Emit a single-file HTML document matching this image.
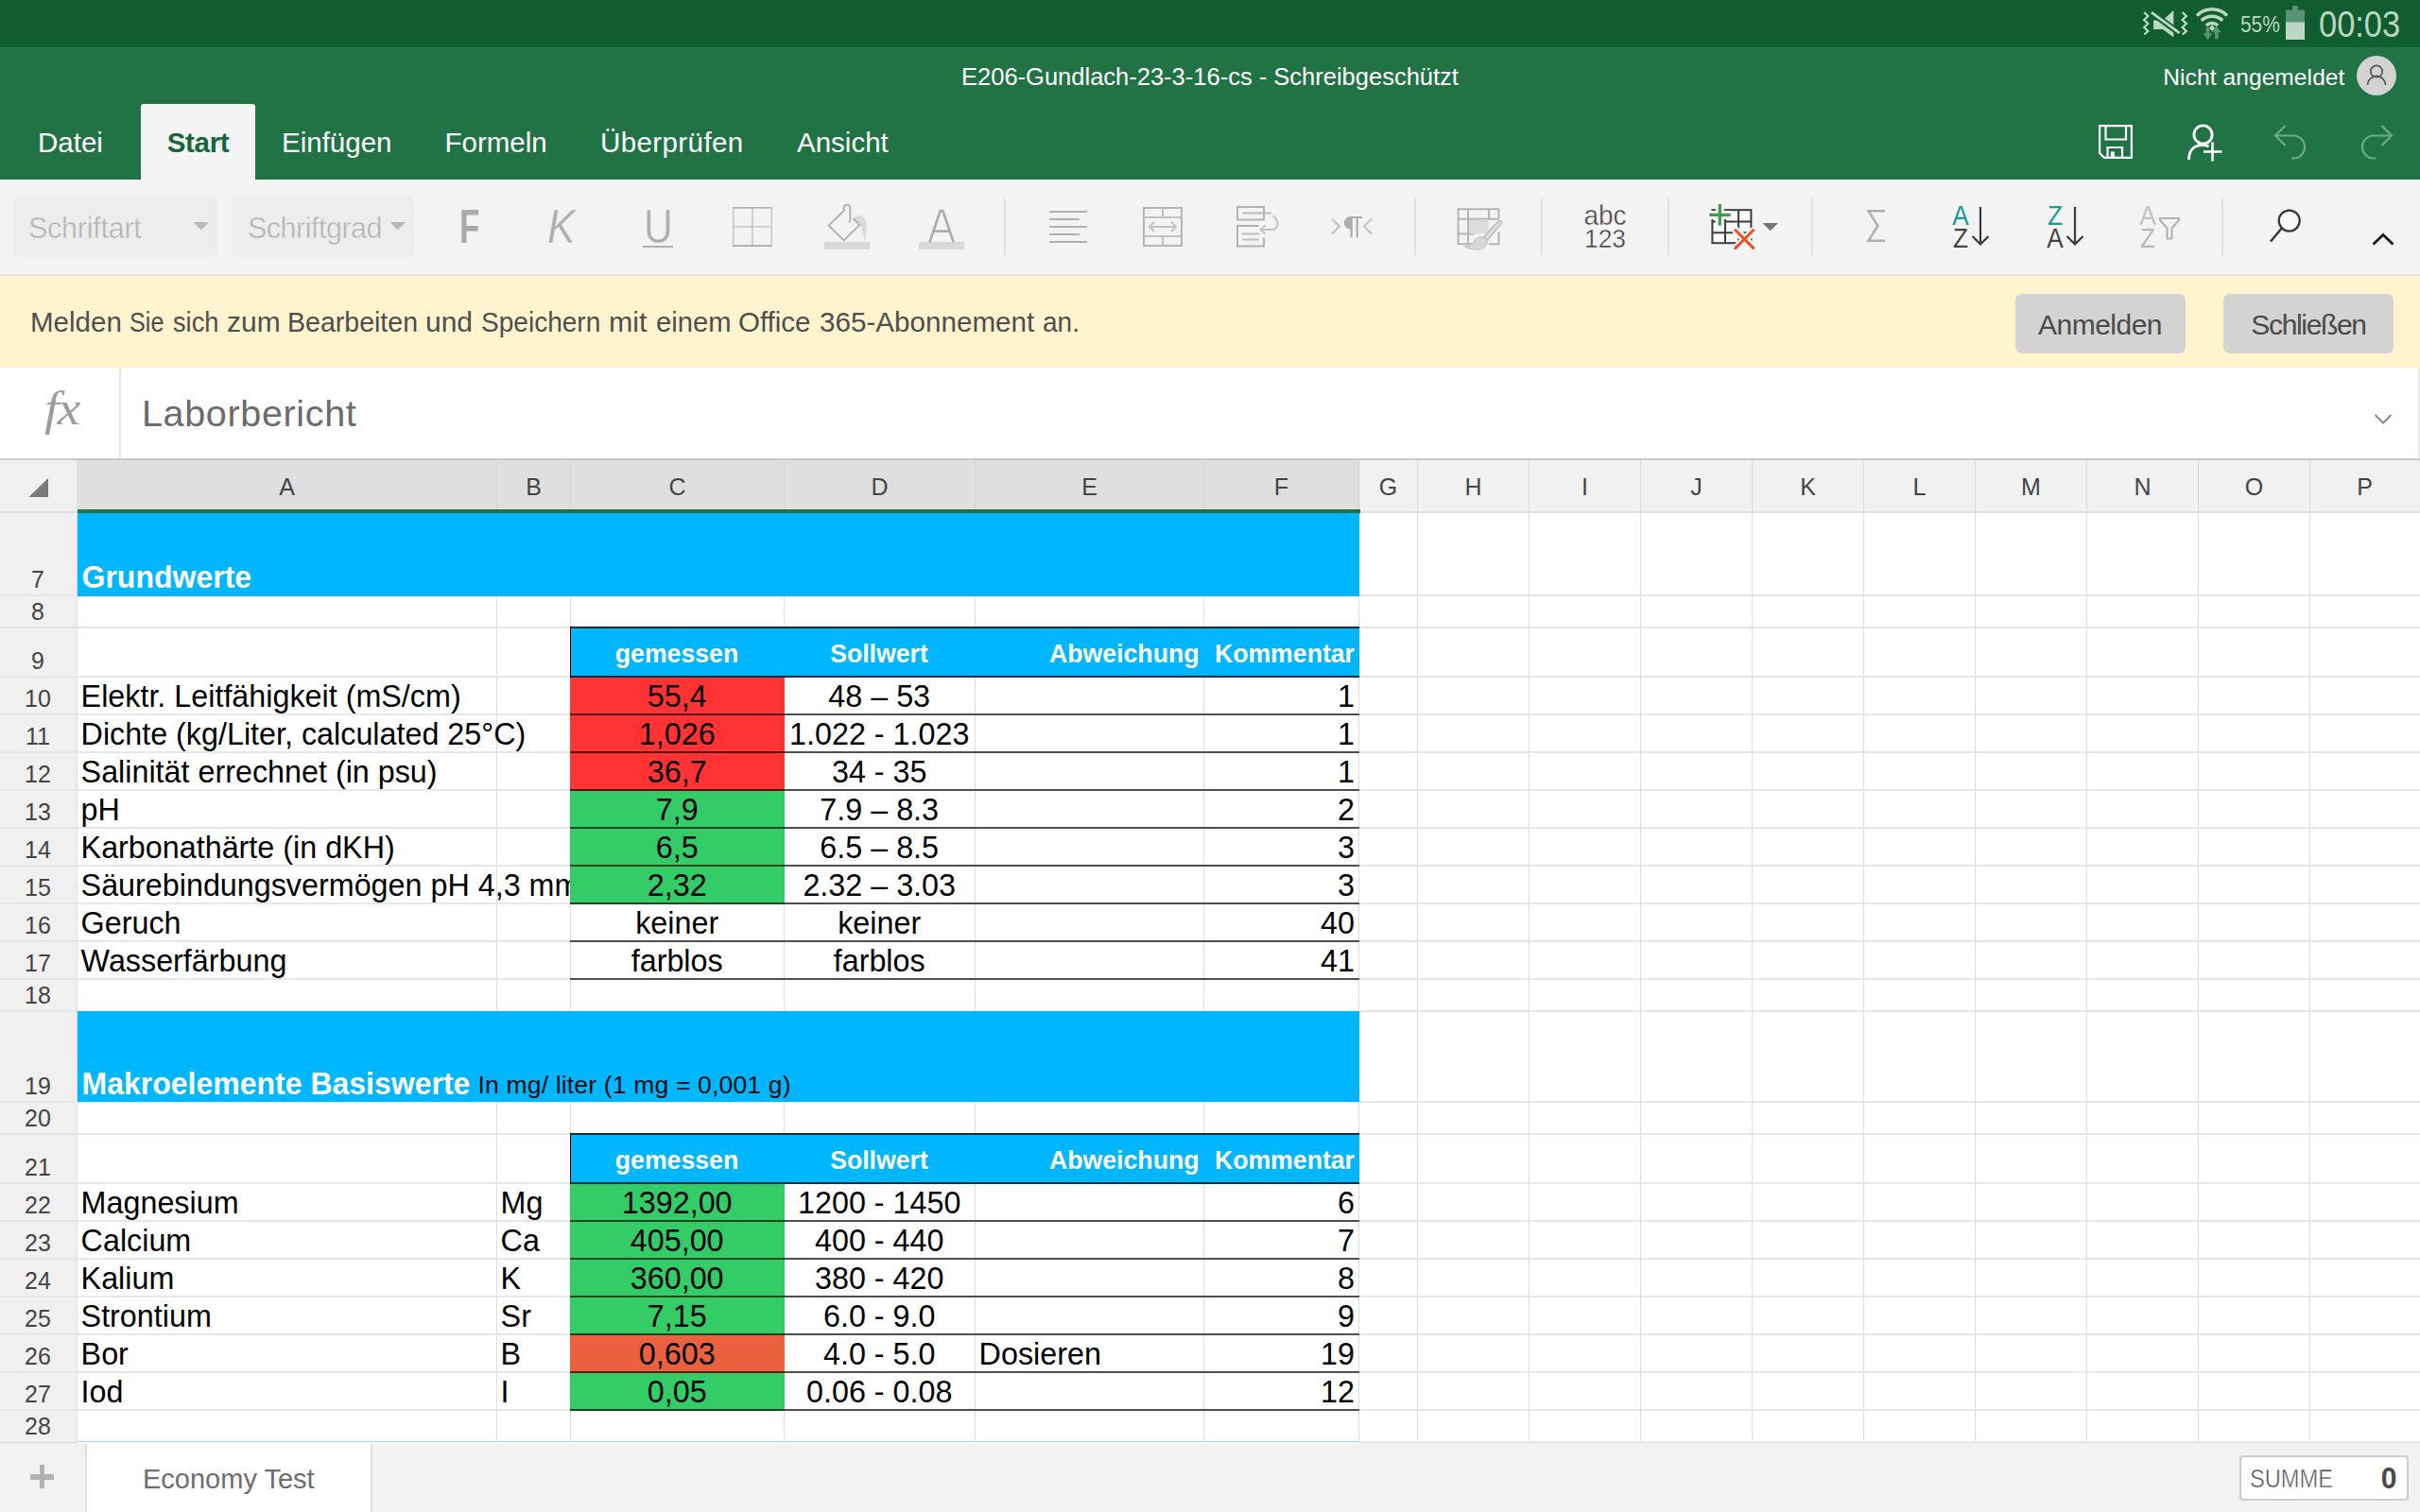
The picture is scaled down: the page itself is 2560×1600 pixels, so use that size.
<!DOCTYPE html>
<html><head><meta charset="utf-8"><title>Excel</title>
<style>
html,body{margin:0;padding:0;width:2560px;height:1600px;overflow:hidden;}
body{width:2560px;height:1600px;position:relative;overflow:hidden;background:#fff;font-family:"Liberation Sans",sans-serif;}
div,svg{box-sizing:border-box;}
</style></head><body><div id="root" style="position:absolute;left:0;top:0;width:2560px;height:1600px;overflow:hidden;">
<div style="position:absolute;left:0px;top:0px;width:2560px;height:50px;background:#105d30;"></div>
<div style="position:absolute;left:0px;top:50px;width:2560px;height:140px;background:#217346;"></div>
<div style="position:absolute;left:0px;top:190px;width:2560px;height:101px;background:#f3f3f3;"></div>
<div style="position:absolute;left:0px;top:290px;width:2560px;height:2px;background:#e3e3e3;"></div>
<div style="position:absolute;left:0px;top:292px;width:2560px;height:97px;background:#fff4ce;"></div>
<div style="position:absolute;left:0px;top:389px;width:2560px;height:96px;background:#ffffff;"></div>
<div style="position:absolute;left:0px;top:485px;width:2560px;height:2px;background:#c9c9c9;"></div>
<div style="position:absolute;top:10.38px;line-height:31px;font-size:24px;color:#bcd6c5;white-space:nowrap;font-family:'Liberation Sans',sans-serif;left:2369.5px;transform:scaleX(.87);transform-origin:left;">55%</div>
<div style="position:absolute;top:1.73px;line-height:49px;font-size:38px;color:#bcd6c5;white-space:nowrap;font-family:'Liberation Sans',sans-serif;left:2452.5px;transform:scaleX(.905);transform-origin:left;">00:03</div>
<svg style="position:absolute;left:2418px;top:6px" width="20" height="36" viewBox="0 0 20 36"><rect x="7" y="0" width="6" height="5" fill="#5a9373"/><rect x="0" y="4.5" width="20" height="13.5" fill="#5a9373"/><rect x="0" y="17.5" width="20" height="18.5" fill="#bcd6c5"/></svg>
<svg style="position:absolute;left:2263.5px;top:8px" width="54" height="34" viewBox="0 0 52 34" preserveAspectRatio="none"><g fill="none" stroke="#bcd6c5" stroke-width="2.2"><path d="M4 5 l4 4 l-4 4 l4 4 l-4 4 l4 4 l-4 3.5"/><path d="M43 5 l4 4 l-4 4 l4 4 l-4 4 l4 4 l-4 3.5"/></g><path d="M13.5 13.5 h9.5 l11 -10.5 v28.5 l-11 -8.5 h-9.5 z" fill="#bcd6c5"/><path d="M10 4 L41 28" stroke="#105d30" stroke-width="6.4"/><path d="M11.5 5.2 L40 26.8" stroke="#bcd6c5" stroke-width="2.7"/></svg>
<svg style="position:absolute;left:2322px;top:6px" width="36" height="37" viewBox="0 0 36 37"><g fill="none" stroke="#bcd6c5" stroke-width="3.6">
<path d="M2 10.5 A22.5 22.5 0 0 1 34 10.5"/>
<path d="M6.8 15.8 A16 16 0 0 1 29.2 15.8"/>
<path d="M11.8 21 A9 9 0 0 1 24.2 21"/></g>
<path d="M14.8 23.8 L18 20.2 L21.2 23.8 L18 27 z" fill="#bcd6c5"/>
<path d="M11.7 23 h3.6 v6.5 h3 l-4.8 6.8 l-4.8 -6.8 h3 z" fill="#5a9373"/>
<path d="M21 35.2 h3.6 v-7 h3 l-4.8 -6.8 l-4.8 6.8 h3 z" fill="#5a9373"/></svg>
<div style="position:absolute;top:65.16px;line-height:33px;font-size:25.5px;color:#ffffff;white-space:nowrap;font-family:'Liberation Sans',sans-serif;left:280px;width:2000px;text-align:center;">E206-Gundlach-23-3-16-cs - Schreibgeschützt</div>
<div style="position:absolute;top:65.51px;line-height:32px;font-size:24.5px;color:#ffffff;white-space:nowrap;font-family:'Liberation Sans',sans-serif;letter-spacing:0.1px;left:480.5px;width:2000px;text-align:right;">Nicht angemeldet</div>
<svg style="position:absolute;left:2492px;top:58px" width="44" height="44" viewBox="0 0 44 44"><circle cx="22" cy="22" r="21" fill="#d2d2d2"/>
<circle cx="22" cy="17.5" r="6.2" fill="none" stroke="#5a5a5a" stroke-width="1.8"/>
<path d="M12.5 32 a9.5 9.5 0 0 1 19 0" fill="none" stroke="#5a5a5a" stroke-width="1.8"/></svg>
<div style="position:absolute;left:149px;top:110px;width:121px;height:80px;background:#f3f3f3;border-radius:3px 3px 0 0;"></div>
<div style="position:absolute;top:131.77px;line-height:38px;font-size:29.5px;color:#fff;white-space:nowrap;font-family:'Liberation Sans',sans-serif;left:40px;">Datei</div>
<div style="position:absolute;top:131.77px;line-height:38px;font-size:29.5px;color:#17653a;white-space:nowrap;font-family:'Liberation Sans',sans-serif;font-weight:bold;letter-spacing:-0.3px;left:-790.5px;width:2000px;text-align:center;">Start</div>
<div style="position:absolute;top:131.77px;line-height:38px;font-size:29.5px;color:#fff;white-space:nowrap;font-family:'Liberation Sans',sans-serif;left:298px;">Einfügen</div>
<div style="position:absolute;top:131.77px;line-height:38px;font-size:29.5px;color:#fff;white-space:nowrap;font-family:'Liberation Sans',sans-serif;left:470.5px;">Formeln</div>
<div style="position:absolute;top:131.77px;line-height:38px;font-size:29.5px;color:#fff;white-space:nowrap;font-family:'Liberation Sans',sans-serif;letter-spacing:0.4px;left:635px;">Überprüfen</div>
<div style="position:absolute;top:131.77px;line-height:38px;font-size:29.5px;color:#fff;white-space:nowrap;font-family:'Liberation Sans',sans-serif;left:843px;">Ansicht</div>
<svg style="position:absolute;left:2218px;top:130px" width="40" height="40" viewBox="0 0 40 40"><g fill="none" stroke="#fff" stroke-width="2.2">
<path d="M3.1 3.1 H36.9 V36.9 H8 L3.1 32 Z"/>
<path d="M9.5 3.1 V17.5 H31 V3.1"/>
<path d="M11.5 36.9 V26 H27 V36.9"/>
</g><rect x="14.8" y="30.5" width="4" height="6.4" fill="#fff"/></svg>
<svg style="position:absolute;left:2312px;top:130px" width="40" height="42" viewBox="0 0 40 42"><g fill="none" stroke="#fff" stroke-width="2.8">
<circle cx="18.5" cy="12.5" r="9.6"/>
<path d="M3.5 39 C3.5 28 10 23.5 18 23.5 C20.5 23.5 22.5 24 24.5 25"/>
<path d="M28.5 20.5 V40.5 M19 30.5 H38.5" stroke-width="2.6"/></g></svg>
<svg style="position:absolute;left:2404px;top:130px" width="38" height="40" viewBox="0 0 38 40"><g fill="none" stroke="#6fa88a" stroke-width="2.2">
<path d="M13.5 3 L3 13.5 L13.5 24"/>
<path d="M3 13.5 H22 A12 12 0 0 1 22 37.5 H20"/></g></svg>
<svg style="position:absolute;left:2494.5px;top:130px" width="38" height="40" viewBox="0 0 38 40"><g fill="none" stroke="#6fa88a" stroke-width="2.2" transform="translate(38,0) scale(-1,1)">
<path d="M13.5 3 L3 13.5 L13.5 24"/>
<path d="M3 13.5 H22 A12 12 0 0 1 22 37.5 H20"/></g></svg>
<div style="position:absolute;left:14px;top:208px;width:216px;height:64px;background:#ededed;border-radius:6px;"></div>
<div style="position:absolute;left:246px;top:208px;width:192px;height:64px;background:#ededed;border-radius:6px;"></div>
<div style="position:absolute;top:220.93px;line-height:40px;font-size:30.5px;color:#b4b4b4;white-space:nowrap;font-family:'Liberation Sans',sans-serif;letter-spacing:-0.25px;left:30px;-webkit-text-stroke:0.45px #ededed;">Schriftart</div>
<div style="position:absolute;top:220.93px;line-height:40px;font-size:30.5px;color:#b4b4b4;white-space:nowrap;font-family:'Liberation Sans',sans-serif;letter-spacing:-0.5px;left:262px;-webkit-text-stroke:0.45px #ededed;">Schriftgrad</div>
<svg style="position:absolute;left:204px;top:234px" width="18" height="10" viewBox="0 0 18 10"><path d="M0.5 1 H17 L8.75 9.5 Z" fill="#b9b9b9"/></svg>
<svg style="position:absolute;left:412px;top:234px" width="18" height="10" viewBox="0 0 18 10"><path d="M0.5 1 H17 L8.75 9.5 Z" fill="#b9b9b9"/></svg>
<div style="position:absolute;top:207.91px;line-height:64px;font-size:49.3px;color:#a9a9a9;white-space:nowrap;font-family:'Liberation Sans',sans-serif;font-weight:bold;left:486px;transform:scaleX(.705);transform-origin:left;">F</div>
<div style="position:absolute;top:207.91px;line-height:64px;font-size:49.3px;color:#acacac;white-space:nowrap;font-family:'Liberation Sans',sans-serif;font-style:italic;left:579px;transform:scaleX(.9);transform-origin:left;-webkit-text-stroke:0.5px #f3f3f3;">K</div>
<div style="position:absolute;top:207.91px;line-height:64px;font-size:49.3px;color:#acacac;white-space:nowrap;font-family:'Liberation Sans',sans-serif;left:680.6px;transform:scaleX(.86);transform-origin:left;-webkit-text-stroke:0.5px #f3f3f3;">U</div>
<div style="position:absolute;left:680px;top:260px;width:32px;height:2px;background:#b0b0b0;"></div>
<svg style="position:absolute;left:774px;top:218px" width="44" height="44" viewBox="0 0 44 44"><g fill="none" stroke="#c6c6c6" stroke-width="1.6"><rect x="1.8" y="1.8" width="40.4" height="40.4"/><path d="M22 1.8 V42.2 M1.8 22 H42.2"/></g>
<path d="M1 1.8 H43" stroke="#b4b4b4" stroke-width="1.6"/><path d="M1 42.2 H43" stroke="#ababab" stroke-width="1.8"/></svg>
<div style="position:absolute;left:872px;top:256px;width:48px;height:8px;background:#d9d9d9;"></div>
<svg style="position:absolute;left:872px;top:212px" width="50" height="46" viewBox="0 0 50 46"><path d="M30.8 19.2 C33 16 38 15 41 17.5 C44.5 20.5 45 26 44.7 31 C44.5 36 43.3 40 42.4 42.9 C41.5 36 40.5 31 38.7 27.5 Z" fill="#dadada"/>
<path d="M20.8 11 L4.6 26.4 L20.6 42.4 L37.2 26.1 L30.4 19.3" fill="none" stroke="#b0b0b0" stroke-width="1.9" stroke-linejoin="miter"/>
<path d="M20.8 11.8 V8 A3.25 3.25 0 0 1 27.3 8 V23.5" fill="none" stroke="#b0b0b0" stroke-width="1.9"/></svg>
<div style="position:absolute;left:972px;top:256px;width:48px;height:8px;background:#d9d9d9;"></div>
<svg style="position:absolute;left:980px;top:220px" width="32" height="38" viewBox="0 0 32 38"><path d="M3.4 36.4 L14.7 3.1 H17.4 L28.7 36.4 M8.6 24.7 H23.5" fill="none" stroke="#adadad" stroke-width="2.7"/></svg>
<div style="position:absolute;left:1062px;top:210px;width:2px;height:60px;background:#e1e1e1;"></div>
<div style="position:absolute;left:1496px;top:210px;width:2px;height:60px;background:#e1e1e1;"></div>
<div style="position:absolute;left:1630px;top:210px;width:2px;height:60px;background:#e1e1e1;"></div>
<div style="position:absolute;left:1764px;top:210px;width:2px;height:60px;background:#e1e1e1;"></div>
<div style="position:absolute;left:1916px;top:210px;width:2px;height:60px;background:#e1e1e1;"></div>
<div style="position:absolute;left:2350px;top:210px;width:2px;height:60px;background:#e1e1e1;"></div>
<div style="position:absolute;left:1110px;top:223px;width:40px;height:2px;background:#b0b0b0;"></div>
<div style="position:absolute;left:1110px;top:231px;width:32px;height:2px;background:#b0b0b0;"></div>
<div style="position:absolute;left:1110px;top:239px;width:40px;height:2px;background:#b0b0b0;"></div>
<div style="position:absolute;left:1110px;top:247px;width:32px;height:2px;background:#b0b0b0;"></div>
<div style="position:absolute;left:1110px;top:255px;width:40px;height:2px;background:#b0b0b0;"></div>
<svg style="position:absolute;left:1208px;top:218px" width="44" height="44" viewBox="0 0 44 44"><g fill="none" stroke="#b4b4b4" stroke-width="2"><rect x="2" y="2" width="40" height="40"/>
<path d="M2 12 H42 M2 32 H42 M22 2 V12 M22 32 V42" stroke="#c2c2c2"/>
<path d="M8 22 H36 M13 17 L8 22 L13 27 M31 17 L36 22 L31 27" stroke="#c2c2c2"/></g></svg>
<svg style="position:absolute;left:1306px;top:216px" width="48" height="48" viewBox="0 0 48 48"><g fill="none" stroke="#b2b2b2" stroke-width="2">
<rect x="3" y="3" width="28" height="13.5"/>
<path d="M8 9.5 H39" stroke="#bdbdbd"/>
<path d="M25.5 23 H3 V44.5 H31 V35.5"/>
<path d="M8 31.5 H26 M8 37.5 H26" stroke="#bdbdbd"/>
<path d="M40.2 12.4 C47.5 16.5 47.5 27 39 27 H27.4 M32.4 22.2 L27.4 27 L32.4 31.8" stroke="#c4c4c4"/></g></svg>
<svg style="position:absolute;left:1406px;top:226px" width="48" height="28" viewBox="0 0 48 28"><g fill="none" stroke="#c0c0c0" stroke-width="2"><path d="M3 5.5 L11 13.5 L3 21.5"/><path d="M45 5.5 L37 13.5 L45 21.5"/></g>
<path d="M22.5 3 A6.7 6.7 0 0 0 22.5 16.4 V25.5 H24.8 V5 H28.6 V25.5 H30.8 V5 H35 V3 Z" fill="#adadad"/></svg>
<svg style="position:absolute;left:1540px;top:219px" width="52" height="48" viewBox="0 0 52 48"><g fill="none" stroke="#b4b4b4" stroke-width="2">
<path d="M30 39.2 H2.6 V2.2 H45.5 V12.5"/><path d="M45.5 26.5 V39.2 H35"/>
<path d="M13.1 2.2 V39.2 M35 2.2 V12.7 M2.6 12.7 H45.5 M2.6 28.6 H20"/></g>
<rect x="14.1" y="13.7" width="20.4" height="14.4" fill="#dcdcdc"/>
<path d="M47.6 15 C48.7 15.8 48.5 17.2 47.7 18.2 L33.3 35 L29.6 32 L44.5 15.7 C45.4 14.7 46.7 14.3 47.6 15 Z" fill="#e2e2e2" stroke="#b9b9b9" stroke-width="1.5"/>
<path d="M29.2 31.7 L33.6 35.4 C33.6 40.5 30 44.3 24 44.9 C18 45.4 13 44 9.6 41.8 C15 41.6 18 39.5 19.5 36.5 C21 33.5 25 31.2 29.2 31.7 Z" fill="#d8d8d8" stroke="#c4c4c4" stroke-width="1.2"/></svg>
<div style="position:absolute;top:209.62px;line-height:37px;font-size:28.5px;color:#444;white-space:nowrap;font-family:'Liberation Sans',sans-serif;left:698px;width:2000px;text-align:center;transform:scale(0.98,1.05);transform-origin:50% 28.38px;-webkit-text-stroke:0.4px #f3f3f3;">abc</div>
<div style="position:absolute;top:234.80px;line-height:36px;font-size:27.4px;color:#444;white-space:nowrap;font-family:'Liberation Sans',sans-serif;left:698px;width:2000px;text-align:center;transform:scale(0.96,1);transform-origin:50% 27.50px;-webkit-text-stroke:0.4px #f3f3f3;">123</div>
<svg style="position:absolute;left:1804px;top:212px" width="56" height="56" viewBox="0 0 56 56"><g fill="none" stroke="#3c3c3c" stroke-width="2">
<rect x="7.4" y="10.2" width="41" height="35" fill="#f9f9f9"/>
<path d="M21 10.2 V45.2 M35.1 10.2 V45.2 M7.4 22.6 H48.4 M7.4 34.3 H48.4"/></g>
<path d="M15.3 3 V27.6 M3 15.4 H27.6" stroke="#f4f4f4" stroke-width="9" fill="none"/>
<path d="M31.5 31.2 L52 51.7 M52 31.2 L31.5 51.7" stroke="#f4f4f4" stroke-width="8.5" fill="none"/>
<path d="M15.3 4.1 V26.6 M4.2 15.4 H26.6" stroke="#3f9b46" stroke-width="3.2" fill="none"/>
<path d="M31 30.8 L51.6 51.4 M51.6 30.8 L31 51.4" stroke="#f04e23" stroke-width="3" fill="none"/></svg>
<svg style="position:absolute;left:1864px;top:235px" width="18" height="10" viewBox="0 0 18 10"><path d="M0.5 1 H17 L8.75 9.2 Z" fill="#777"/></svg>
<svg style="position:absolute;left:1972px;top:220px" width="24" height="38" viewBox="0 0 24 38"><path d="M22 3.2 H4.5 L14.5 19 L4.5 34.8 H22" fill="none" stroke="#adadad" stroke-width="2.4"/></svg>
<div style="position:absolute;top:209.62px;line-height:37px;font-size:28.2px;color:#1a9a93;white-space:nowrap;font-family:'Liberation Sans',sans-serif;left:1074px;width:2000px;text-align:center;transform:scale(0.93,1.07);transform-origin:50% 28.28px;">A</div>
<div style="position:absolute;top:233.52px;line-height:37px;font-size:28.2px;color:#444;white-space:nowrap;font-family:'Liberation Sans',sans-serif;left:1074px;width:2000px;text-align:center;transform:scale(0.93,1.07);transform-origin:50% 28.28px;">Z</div>
<svg style="position:absolute;left:2084px;top:217px" width="22" height="46" viewBox="0 0 22 46"><path d="M11 2 V41.5 M2.5 33 L11 41.5 L19.5 33" fill="none" stroke="#3c3c3c" stroke-width="2.2"/></svg>
<div style="position:absolute;top:209.62px;line-height:37px;font-size:28.2px;color:#1a9a93;white-space:nowrap;font-family:'Liberation Sans',sans-serif;left:1174px;width:2000px;text-align:center;transform:scale(0.93,1.07);transform-origin:50% 28.28px;">Z</div>
<div style="position:absolute;top:233.52px;line-height:37px;font-size:28.2px;color:#444;white-space:nowrap;font-family:'Liberation Sans',sans-serif;left:1174px;width:2000px;text-align:center;transform:scale(0.93,1.07);transform-origin:50% 28.28px;">A</div>
<svg style="position:absolute;left:2184px;top:217px" width="22" height="46" viewBox="0 0 22 46"><path d="M11 2 V41.5 M2.5 33 L11 41.5 L19.5 33" fill="none" stroke="#3c3c3c" stroke-width="2.2"/></svg>
<div style="position:absolute;top:209.62px;line-height:37px;font-size:28.2px;color:#c2c2c2;white-space:nowrap;font-family:'Liberation Sans',sans-serif;left:1272px;width:2000px;text-align:center;transform:scale(0.93,1.07);transform-origin:50% 28.28px;">A</div>
<div style="position:absolute;top:233.52px;line-height:37px;font-size:28.2px;color:#b8b8b8;white-space:nowrap;font-family:'Liberation Sans',sans-serif;left:1272px;width:2000px;text-align:center;transform:scale(0.93,1.07);transform-origin:50% 28.28px;">Z</div>
<svg style="position:absolute;left:2282px;top:228px" width="26" height="28" viewBox="0 0 26 28"><path d="M3 3 H23 V5 L15.5 13.5 V24.5 H10.5 V13.5 L3 5 Z" fill="none" stroke="#b2b2b2" stroke-width="2.1"/></svg>
<svg style="position:absolute;left:2398px;top:218px" width="40" height="42" viewBox="0 0 40 42"><circle cx="23.7" cy="15.6" r="11" fill="#fafafa" stroke="#333" stroke-width="2.2"/><path d="M15.5 23.8 L4 37.5" stroke="#333" stroke-width="2.4"/></svg>
<svg style="position:absolute;left:2508px;top:244px" width="26" height="18" viewBox="0 0 26 18"><path d="M2.5 14.5 L13 4.5 L23.5 14.5" fill="none" stroke="#1e1e1e" stroke-width="2.8"/></svg>
<div style="position:absolute;top:321.77px;line-height:38px;font-size:29.5px;color:#4e4e4e;white-space:nowrap;font-family:'Liberation Sans',sans-serif;left:31.6px;transform:scale(1.0016,1);transform-origin:0 29.23px;">Melden</div>
<div style="position:absolute;top:321.77px;line-height:38px;font-size:29.5px;color:#4e4e4e;white-space:nowrap;font-family:'Liberation Sans',sans-serif;left:136.95px;transform:scale(0.8537,1);transform-origin:0 29.23px;">Sie</div>
<div style="position:absolute;top:321.77px;line-height:38px;font-size:29.5px;color:#4e4e4e;white-space:nowrap;font-family:'Liberation Sans',sans-serif;left:183.2px;transform:scale(0.9226,1);transform-origin:0 29.23px;">sich</div>
<div style="position:absolute;top:321.77px;line-height:38px;font-size:29.5px;color:#4e4e4e;white-space:nowrap;font-family:'Liberation Sans',sans-serif;left:239.68px;transform:scale(1.0159,1);transform-origin:0 29.23px;">zum</div>
<div style="position:absolute;top:321.77px;line-height:38px;font-size:29.5px;color:#4e4e4e;white-space:nowrap;font-family:'Liberation Sans',sans-serif;left:303.67px;transform:scale(0.9671,1);transform-origin:0 29.23px;">Bearbeiten</div>
<div style="position:absolute;top:321.77px;line-height:38px;font-size:29.5px;color:#4e4e4e;white-space:nowrap;font-family:'Liberation Sans',sans-serif;left:450.38px;transform:scale(1.0168,1);transform-origin:0 29.23px;">und</div>
<div style="position:absolute;top:321.77px;line-height:38px;font-size:29.5px;color:#4e4e4e;white-space:nowrap;font-family:'Liberation Sans',sans-serif;left:509.45px;transform:scale(0.9507,1);transform-origin:0 29.23px;">Speichern</div>
<div style="position:absolute;top:321.77px;line-height:38px;font-size:29.5px;color:#4e4e4e;white-space:nowrap;font-family:'Liberation Sans',sans-serif;left:644.47px;transform:scale(1.0281,1);transform-origin:0 29.23px;">mit</div>
<div style="position:absolute;top:321.77px;line-height:38px;font-size:29.5px;color:#4e4e4e;white-space:nowrap;font-family:'Liberation Sans',sans-serif;left:694.11px;transform:scale(0.9888,1);transform-origin:0 29.23px;">einem</div>
<div style="position:absolute;top:321.77px;line-height:38px;font-size:29.5px;color:#4e4e4e;white-space:nowrap;font-family:'Liberation Sans',sans-serif;left:780.9px;transform:scale(0.9999,1);transform-origin:0 29.23px;">Office</div>
<div style="position:absolute;top:321.77px;line-height:38px;font-size:29.5px;color:#4e4e4e;white-space:nowrap;font-family:'Liberation Sans',sans-serif;left:866.5px;transform:scale(1.0043,1);transform-origin:0 29.23px;">365-Abonnement</div>
<div style="position:absolute;top:321.77px;line-height:38px;font-size:29.5px;color:#4e4e4e;white-space:nowrap;font-family:'Liberation Sans',sans-serif;left:1103.35px;transform:scale(0.9494,1);transform-origin:0 29.23px;">an.</div>
<div style="position:absolute;left:2132px;top:311px;width:180px;height:63px;background:#d3d3d3;border-radius:7px;"></div>
<div style="position:absolute;left:2352px;top:311px;width:180px;height:63px;background:#d3d3d3;border-radius:7px;"></div>
<div style="position:absolute;top:324.40px;line-height:39px;font-size:30px;color:#4a4a4a;white-space:nowrap;font-family:'Liberation Sans',sans-serif;letter-spacing:-0.5px;left:1221.5px;width:2000px;text-align:center;">Anmelden</div>
<div style="position:absolute;top:324.40px;line-height:39px;font-size:30px;color:#4a4a4a;white-space:nowrap;font-family:'Liberation Sans',sans-serif;letter-spacing:-1.35px;left:1442px;width:2000px;text-align:center;">Schließen</div>
<div style="position:absolute;left:126px;top:389px;width:2px;height:96px;background:#e6e6e6;"></div>
<div style="position:absolute;top:399.62px;line-height:65px;font-size:50px;color:#9c9c9c;white-space:nowrap;font-family:'Liberation Serif',serif;font-style:italic;letter-spacing:-1.5px;left:47px;transform:scaleX(1.1);transform-origin:left;">fx</div>
<div style="position:absolute;top:411.61px;line-height:51px;font-size:39.5px;color:#6b6b6b;white-space:nowrap;font-family:'Liberation Sans',sans-serif;letter-spacing:0.65px;left:150px;">Laborbericht</div>
<svg style="position:absolute;left:2510px;top:436px" width="22" height="14" viewBox="0 0 22 14"><path d="M2.5 3 L11 11.5 L19.5 3" fill="none" stroke="#8a8a8a" stroke-width="2"/></svg>
<div style="position:absolute;left:2558px;top:389px;width:2px;height:96px;background:#ececec;"></div>
<div style="position:absolute;left:0px;top:487px;width:82px;height:1039px;background:#f0f0f0;"></div>
<div style="position:absolute;left:82px;top:487px;width:1356px;height:52px;background:#dfdfdf;"></div>
<div style="position:absolute;left:1438px;top:487px;width:1122px;height:54px;background:#f1f1f1;"></div>
<div style="position:absolute;left:1438px;top:541px;width:1122px;height:2px;background:#dedede;"></div>
<div style="position:absolute;left:82px;top:539px;width:1357px;height:4px;background:#217346;"></div>
<div style="position:absolute;left:0px;top:541px;width:81px;height:2px;background:#dedede;"></div>
<div style="position:absolute;left:81px;top:487px;width:1px;height:1039px;background:#dfdfdf;"></div>
<svg style="position:absolute;left:28px;top:504px" width="26" height="24" viewBox="0 0 26 24"><path d="M23 2 V22 H2.5 Z" fill="#7a7a7a"/></svg>
<div style="position:absolute;top:498.93px;line-height:32px;font-size:25px;color:#444;white-space:nowrap;font-family:'Liberation Sans',sans-serif;left:-696.5px;width:2000px;text-align:center;">A</div>
<div style="position:absolute;top:498.93px;line-height:32px;font-size:25px;color:#444;white-space:nowrap;font-family:'Liberation Sans',sans-serif;left:-435.5px;width:2000px;text-align:center;">B</div>
<div style="position:absolute;left:525px;top:487px;width:1px;height:52px;background:#d4d4d4;"></div>
<div style="position:absolute;top:498.93px;line-height:32px;font-size:25px;color:#444;white-space:nowrap;font-family:'Liberation Sans',sans-serif;left:-283.5px;width:2000px;text-align:center;">C</div>
<div style="position:absolute;left:603px;top:487px;width:1px;height:52px;background:#d4d4d4;"></div>
<div style="position:absolute;top:498.93px;line-height:32px;font-size:25px;color:#444;white-space:nowrap;font-family:'Liberation Sans',sans-serif;left:-69.5px;width:2000px;text-align:center;">D</div>
<div style="position:absolute;left:829px;top:487px;width:1px;height:52px;background:#d4d4d4;"></div>
<div style="position:absolute;top:498.93px;line-height:32px;font-size:25px;color:#444;white-space:nowrap;font-family:'Liberation Sans',sans-serif;left:152.5px;width:2000px;text-align:center;">E</div>
<div style="position:absolute;left:1031px;top:487px;width:1px;height:52px;background:#d4d4d4;"></div>
<div style="position:absolute;top:498.93px;line-height:32px;font-size:25px;color:#444;white-space:nowrap;font-family:'Liberation Sans',sans-serif;left:355.5px;width:2000px;text-align:center;">F</div>
<div style="position:absolute;left:1273px;top:487px;width:1px;height:52px;background:#d4d4d4;"></div>
<div style="position:absolute;top:498.93px;line-height:32px;font-size:25px;color:#444;white-space:nowrap;font-family:'Liberation Sans',sans-serif;left:468.5px;width:2000px;text-align:center;">G</div>
<div style="position:absolute;left:1437px;top:487px;width:1px;height:52px;background:#d0d0d0;"></div>
<div style="position:absolute;top:498.93px;line-height:32px;font-size:25px;color:#444;white-space:nowrap;font-family:'Liberation Sans',sans-serif;left:558.5px;width:2000px;text-align:center;">H</div>
<div style="position:absolute;left:1499px;top:487px;width:1px;height:54px;background:#dadada;"></div>
<div style="position:absolute;top:498.93px;line-height:32px;font-size:25px;color:#444;white-space:nowrap;font-family:'Liberation Sans',sans-serif;left:676.5px;width:2000px;text-align:center;">I</div>
<div style="position:absolute;left:1617px;top:487px;width:1px;height:54px;background:#dadada;"></div>
<div style="position:absolute;top:498.93px;line-height:32px;font-size:25px;color:#444;white-space:nowrap;font-family:'Liberation Sans',sans-serif;left:794.5px;width:2000px;text-align:center;">J</div>
<div style="position:absolute;left:1735px;top:487px;width:1px;height:54px;background:#dadada;"></div>
<div style="position:absolute;top:498.93px;line-height:32px;font-size:25px;color:#444;white-space:nowrap;font-family:'Liberation Sans',sans-serif;left:912.5px;width:2000px;text-align:center;">K</div>
<div style="position:absolute;left:1853px;top:487px;width:1px;height:54px;background:#dadada;"></div>
<div style="position:absolute;top:498.93px;line-height:32px;font-size:25px;color:#444;white-space:nowrap;font-family:'Liberation Sans',sans-serif;left:1030.5px;width:2000px;text-align:center;">L</div>
<div style="position:absolute;left:1971px;top:487px;width:1px;height:54px;background:#dadada;"></div>
<div style="position:absolute;top:498.93px;line-height:32px;font-size:25px;color:#444;white-space:nowrap;font-family:'Liberation Sans',sans-serif;left:1148.5px;width:2000px;text-align:center;">M</div>
<div style="position:absolute;left:2089px;top:487px;width:1px;height:54px;background:#dadada;"></div>
<div style="position:absolute;top:498.93px;line-height:32px;font-size:25px;color:#444;white-space:nowrap;font-family:'Liberation Sans',sans-serif;left:1266.5px;width:2000px;text-align:center;">N</div>
<div style="position:absolute;left:2207px;top:487px;width:1px;height:54px;background:#dadada;"></div>
<div style="position:absolute;top:498.93px;line-height:32px;font-size:25px;color:#444;white-space:nowrap;font-family:'Liberation Sans',sans-serif;left:1384.5px;width:2000px;text-align:center;">O</div>
<div style="position:absolute;left:2325px;top:487px;width:1px;height:54px;background:#dadada;"></div>
<div style="position:absolute;top:498.93px;line-height:32px;font-size:25px;color:#444;white-space:nowrap;font-family:'Liberation Sans',sans-serif;left:1501.5px;width:2000px;text-align:center;">P</div>
<div style="position:absolute;left:2443px;top:487px;width:1px;height:54px;background:#dadada;"></div>
<div style="position:absolute;left:0px;top:629px;width:81px;height:2px;background:#e5e5e5;"></div>
<div style="position:absolute;left:82px;top:629px;width:2478px;height:2px;background:#e6e7e8;"></div>
<div style="position:absolute;left:0px;top:663px;width:81px;height:2px;background:#e5e5e5;"></div>
<div style="position:absolute;left:82px;top:663px;width:2478px;height:2px;background:#e6e7e8;"></div>
<div style="position:absolute;left:0px;top:715px;width:81px;height:2px;background:#e5e5e5;"></div>
<div style="position:absolute;left:82px;top:715px;width:2478px;height:2px;background:#e6e7e8;"></div>
<div style="position:absolute;left:0px;top:755px;width:81px;height:2px;background:#e5e5e5;"></div>
<div style="position:absolute;left:82px;top:755px;width:2478px;height:2px;background:#e6e7e8;"></div>
<div style="position:absolute;left:0px;top:795px;width:81px;height:2px;background:#e5e5e5;"></div>
<div style="position:absolute;left:82px;top:795px;width:2478px;height:2px;background:#e6e7e8;"></div>
<div style="position:absolute;left:0px;top:835px;width:81px;height:2px;background:#e5e5e5;"></div>
<div style="position:absolute;left:82px;top:835px;width:2478px;height:2px;background:#e6e7e8;"></div>
<div style="position:absolute;left:0px;top:875px;width:81px;height:2px;background:#e5e5e5;"></div>
<div style="position:absolute;left:82px;top:875px;width:2478px;height:2px;background:#e6e7e8;"></div>
<div style="position:absolute;left:0px;top:915px;width:81px;height:2px;background:#e5e5e5;"></div>
<div style="position:absolute;left:82px;top:915px;width:2478px;height:2px;background:#e6e7e8;"></div>
<div style="position:absolute;left:0px;top:955px;width:81px;height:2px;background:#e5e5e5;"></div>
<div style="position:absolute;left:82px;top:955px;width:2478px;height:2px;background:#e6e7e8;"></div>
<div style="position:absolute;left:0px;top:995px;width:81px;height:2px;background:#e5e5e5;"></div>
<div style="position:absolute;left:82px;top:995px;width:2478px;height:2px;background:#e6e7e8;"></div>
<div style="position:absolute;left:0px;top:1035px;width:81px;height:2px;background:#e5e5e5;"></div>
<div style="position:absolute;left:82px;top:1035px;width:2478px;height:2px;background:#e6e7e8;"></div>
<div style="position:absolute;left:0px;top:1069px;width:81px;height:2px;background:#e5e5e5;"></div>
<div style="position:absolute;left:82px;top:1069px;width:2478px;height:2px;background:#e6e7e8;"></div>
<div style="position:absolute;left:0px;top:1165px;width:81px;height:2px;background:#e5e5e5;"></div>
<div style="position:absolute;left:82px;top:1165px;width:2478px;height:2px;background:#e6e7e8;"></div>
<div style="position:absolute;left:0px;top:1199px;width:81px;height:2px;background:#e5e5e5;"></div>
<div style="position:absolute;left:82px;top:1199px;width:2478px;height:2px;background:#e6e7e8;"></div>
<div style="position:absolute;left:0px;top:1251px;width:81px;height:2px;background:#e5e5e5;"></div>
<div style="position:absolute;left:82px;top:1251px;width:2478px;height:2px;background:#e6e7e8;"></div>
<div style="position:absolute;left:0px;top:1291px;width:81px;height:2px;background:#e5e5e5;"></div>
<div style="position:absolute;left:82px;top:1291px;width:2478px;height:2px;background:#e6e7e8;"></div>
<div style="position:absolute;left:0px;top:1331px;width:81px;height:2px;background:#e5e5e5;"></div>
<div style="position:absolute;left:82px;top:1331px;width:2478px;height:2px;background:#e6e7e8;"></div>
<div style="position:absolute;left:0px;top:1371px;width:81px;height:2px;background:#e5e5e5;"></div>
<div style="position:absolute;left:82px;top:1371px;width:2478px;height:2px;background:#e6e7e8;"></div>
<div style="position:absolute;left:0px;top:1411px;width:81px;height:2px;background:#e5e5e5;"></div>
<div style="position:absolute;left:82px;top:1411px;width:2478px;height:2px;background:#e6e7e8;"></div>
<div style="position:absolute;left:0px;top:1451px;width:81px;height:2px;background:#e5e5e5;"></div>
<div style="position:absolute;left:82px;top:1451px;width:2478px;height:2px;background:#e6e7e8;"></div>
<div style="position:absolute;left:0px;top:1491px;width:81px;height:2px;background:#e5e5e5;"></div>
<div style="position:absolute;left:82px;top:1491px;width:2478px;height:2px;background:#e6e7e8;"></div>
<div style="position:absolute;left:0px;top:1525px;width:81px;height:2px;background:#e5e5e5;"></div>
<div style="position:absolute;left:525px;top:543px;width:1px;height:983px;background:#dcdddf;"></div>
<div style="position:absolute;left:603px;top:543px;width:1px;height:983px;background:#dcdddf;"></div>
<div style="position:absolute;left:829px;top:543px;width:1px;height:983px;background:#dcdddf;"></div>
<div style="position:absolute;left:1031px;top:543px;width:1px;height:983px;background:#dcdddf;"></div>
<div style="position:absolute;left:1273px;top:543px;width:1px;height:983px;background:#dcdddf;"></div>
<div style="position:absolute;left:1437px;top:543px;width:1px;height:983px;background:#dcdddf;"></div>
<div style="position:absolute;left:1499px;top:543px;width:1px;height:983px;background:#dcdddf;"></div>
<div style="position:absolute;left:1617px;top:543px;width:1px;height:983px;background:#dcdddf;"></div>
<div style="position:absolute;left:1735px;top:543px;width:1px;height:983px;background:#dcdddf;"></div>
<div style="position:absolute;left:1853px;top:543px;width:1px;height:983px;background:#dcdddf;"></div>
<div style="position:absolute;left:1971px;top:543px;width:1px;height:983px;background:#dcdddf;"></div>
<div style="position:absolute;left:2089px;top:543px;width:1px;height:983px;background:#dcdddf;"></div>
<div style="position:absolute;left:2207px;top:543px;width:1px;height:983px;background:#dcdddf;"></div>
<div style="position:absolute;left:2325px;top:543px;width:1px;height:983px;background:#dcdddf;"></div>
<div style="position:absolute;left:2443px;top:543px;width:1px;height:983px;background:#dcdddf;"></div>
<div style="position:absolute;top:596.73px;line-height:32px;font-size:25px;color:#444;white-space:nowrap;font-family:'Liberation Sans',sans-serif;left:-960px;width:2000px;text-align:center;">7</div>
<div style="position:absolute;top:630.73px;line-height:32px;font-size:25px;color:#444;white-space:nowrap;font-family:'Liberation Sans',sans-serif;left:-960px;width:2000px;text-align:center;">8</div>
<div style="position:absolute;top:682.73px;line-height:32px;font-size:25px;color:#444;white-space:nowrap;font-family:'Liberation Sans',sans-serif;left:-960px;width:2000px;text-align:center;">9</div>
<div style="position:absolute;top:722.73px;line-height:32px;font-size:25px;color:#444;white-space:nowrap;font-family:'Liberation Sans',sans-serif;left:-960px;width:2000px;text-align:center;">10</div>
<div style="position:absolute;top:762.73px;line-height:32px;font-size:25px;color:#444;white-space:nowrap;font-family:'Liberation Sans',sans-serif;left:-960px;width:2000px;text-align:center;">11</div>
<div style="position:absolute;top:802.73px;line-height:32px;font-size:25px;color:#444;white-space:nowrap;font-family:'Liberation Sans',sans-serif;left:-960px;width:2000px;text-align:center;">12</div>
<div style="position:absolute;top:842.73px;line-height:32px;font-size:25px;color:#444;white-space:nowrap;font-family:'Liberation Sans',sans-serif;left:-960px;width:2000px;text-align:center;">13</div>
<div style="position:absolute;top:882.73px;line-height:32px;font-size:25px;color:#444;white-space:nowrap;font-family:'Liberation Sans',sans-serif;left:-960px;width:2000px;text-align:center;">14</div>
<div style="position:absolute;top:922.73px;line-height:32px;font-size:25px;color:#444;white-space:nowrap;font-family:'Liberation Sans',sans-serif;left:-960px;width:2000px;text-align:center;">15</div>
<div style="position:absolute;top:962.73px;line-height:32px;font-size:25px;color:#444;white-space:nowrap;font-family:'Liberation Sans',sans-serif;left:-960px;width:2000px;text-align:center;">16</div>
<div style="position:absolute;top:1002.73px;line-height:32px;font-size:25px;color:#444;white-space:nowrap;font-family:'Liberation Sans',sans-serif;left:-960px;width:2000px;text-align:center;">17</div>
<div style="position:absolute;top:1036.73px;line-height:32px;font-size:25px;color:#444;white-space:nowrap;font-family:'Liberation Sans',sans-serif;left:-960px;width:2000px;text-align:center;">18</div>
<div style="position:absolute;top:1132.73px;line-height:32px;font-size:25px;color:#444;white-space:nowrap;font-family:'Liberation Sans',sans-serif;left:-960px;width:2000px;text-align:center;">19</div>
<div style="position:absolute;top:1166.73px;line-height:32px;font-size:25px;color:#444;white-space:nowrap;font-family:'Liberation Sans',sans-serif;left:-960px;width:2000px;text-align:center;">20</div>
<div style="position:absolute;top:1218.73px;line-height:32px;font-size:25px;color:#444;white-space:nowrap;font-family:'Liberation Sans',sans-serif;left:-960px;width:2000px;text-align:center;">21</div>
<div style="position:absolute;top:1258.73px;line-height:32px;font-size:25px;color:#444;white-space:nowrap;font-family:'Liberation Sans',sans-serif;left:-960px;width:2000px;text-align:center;">22</div>
<div style="position:absolute;top:1298.73px;line-height:32px;font-size:25px;color:#444;white-space:nowrap;font-family:'Liberation Sans',sans-serif;left:-960px;width:2000px;text-align:center;">23</div>
<div style="position:absolute;top:1338.73px;line-height:32px;font-size:25px;color:#444;white-space:nowrap;font-family:'Liberation Sans',sans-serif;left:-960px;width:2000px;text-align:center;">24</div>
<div style="position:absolute;top:1378.73px;line-height:32px;font-size:25px;color:#444;white-space:nowrap;font-family:'Liberation Sans',sans-serif;left:-960px;width:2000px;text-align:center;">25</div>
<div style="position:absolute;top:1418.73px;line-height:32px;font-size:25px;color:#444;white-space:nowrap;font-family:'Liberation Sans',sans-serif;left:-960px;width:2000px;text-align:center;">26</div>
<div style="position:absolute;top:1458.73px;line-height:32px;font-size:25px;color:#444;white-space:nowrap;font-family:'Liberation Sans',sans-serif;left:-960px;width:2000px;text-align:center;">27</div>
<div style="position:absolute;top:1492.73px;line-height:32px;font-size:25px;color:#444;white-space:nowrap;font-family:'Liberation Sans',sans-serif;left:-960px;width:2000px;text-align:center;">28</div>
<div style="position:absolute;left:82px;top:1525px;width:1356px;height:1px;background:#93d8f7;"></div>
<div style="position:absolute;left:1438px;top:1525px;width:1122px;height:1px;background:#ebebeb;"></div>
<div style="position:absolute;left:1438px;top:1526px;width:1122px;height:2px;background:#dfdfdf;"></div>
<div style="position:absolute;left:82px;top:543px;width:1356px;height:88px;background:#00b7ff;"></div>
<div style="position:absolute;left:82px;top:1070px;width:1356px;height:96px;background:#00b7ff;"></div>
<div style="position:absolute;top:589.91px;line-height:42px;font-size:32px;color:#fff;white-space:nowrap;font-family:'Liberation Sans',sans-serif;font-weight:bold;left:86.5px;transform:scale(1,1.03);transform-origin:0 32.09px;">Grundwerte</div>
<div style="position:absolute;top:1125.91px;line-height:42px;font-size:32px;color:#fff;white-space:nowrap;font-family:'Liberation Sans',sans-serif;font-weight:bold;left:86.5px;transform:scale(1,1.03);transform-origin:0 32.09px;">Makroelemente Basiswerte</div>
<div style="position:absolute;top:1130.61px;line-height:34px;font-size:26.5px;color:#0a0a0a;white-space:nowrap;font-family:'Liberation Sans',sans-serif;letter-spacing:0.17px;left:505.5px;">In mg/ liter (1 mg = 0,001 g)</div>
<div style="position:absolute;left:603px;top:663px;width:835px;height:54px;background:#00b7ff;"></div>
<div style="position:absolute;left:603px;top:663px;width:835px;height:2px;background:rgba(0,0,0,.8);"></div>
<div style="position:absolute;left:603px;top:663px;width:1px;height:54px;background:#000;"></div>
<div style="position:absolute;left:603px;top:715px;width:835px;height:2px;background:rgba(0,0,0,.74);"></div>
<div style="position:absolute;top:674.55px;line-height:35px;font-size:26.67px;color:#fff;white-space:nowrap;font-family:'Liberation Sans',sans-serif;font-weight:bold;left:-284px;width:2000px;text-align:center;transform:scale(1,1.03);transform-origin:50% 26.75px;">gemessen</div>
<div style="position:absolute;top:674.55px;line-height:35px;font-size:26.67px;color:#fff;white-space:nowrap;font-family:'Liberation Sans',sans-serif;font-weight:bold;left:-70px;width:2000px;text-align:center;transform:scale(1,1.03);transform-origin:50% 26.75px;">Sollwert</div>
<div style="position:absolute;top:674.55px;line-height:35px;font-size:26.67px;color:#fff;white-space:nowrap;font-family:'Liberation Sans',sans-serif;font-weight:bold;left:-731.5px;width:2000px;text-align:right;transform:scale(1,1.03);transform-origin:100% 26.75px;">Abweichung</div>
<div style="position:absolute;top:674.55px;line-height:35px;font-size:26.67px;color:#fff;white-space:nowrap;font-family:'Liberation Sans',sans-serif;font-weight:bold;left:-567px;width:2000px;text-align:right;transform:scale(1,1.03);transform-origin:100% 26.75px;">Kommentar</div>
<div style="position:absolute;top:715.50px;line-height:42px;font-size:32.3px;color:#000;white-space:nowrap;font-family:'Liberation Sans',sans-serif;left:85.6px;transform:scale(1,1.04);transform-origin:0 32.20px;">Elektr. Leitfähigkeit (mS/cm)</div>
<div style="position:absolute;left:603px;top:717px;width:227px;height:40px;background:#ff3333;"></div>
<div style="position:absolute;top:715.50px;line-height:42px;font-size:32.3px;color:#000;white-space:nowrap;font-family:'Liberation Sans',sans-serif;left:-283.79999999999995px;width:2000px;text-align:center;transform:scale(1,1.04);transform-origin:50% 32.20px;">55,4</div>
<div style="position:absolute;top:715.50px;line-height:42px;font-size:32.3px;color:#000;white-space:nowrap;font-family:'Liberation Sans',sans-serif;left:-69.79999999999995px;width:2000px;text-align:center;transform:scale(1,1.04);transform-origin:50% 32.20px;">48 – 53</div>
<div style="position:absolute;top:715.50px;line-height:42px;font-size:32.3px;color:#000;white-space:nowrap;font-family:'Liberation Sans',sans-serif;left:-567px;width:2000px;text-align:right;transform:scale(1,1.04);transform-origin:100% 32.20px;">1</div>
<div style="position:absolute;left:603px;top:755px;width:835px;height:2px;background:rgba(0,0,0,.66);"></div>
<div style="position:absolute;top:755.50px;line-height:42px;font-size:32.3px;color:#000;white-space:nowrap;font-family:'Liberation Sans',sans-serif;left:85.6px;transform:scale(1,1.04);transform-origin:0 32.20px;">Dichte (kg/Liter, calculated 25°C)</div>
<div style="position:absolute;left:603px;top:757px;width:227px;height:40px;background:#ff3333;"></div>
<div style="position:absolute;top:755.50px;line-height:42px;font-size:32.3px;color:#000;white-space:nowrap;font-family:'Liberation Sans',sans-serif;left:-283.79999999999995px;width:2000px;text-align:center;transform:scale(1,1.04);transform-origin:50% 32.20px;">1,026</div>
<div style="position:absolute;top:755.50px;line-height:42px;font-size:32.3px;color:#000;white-space:nowrap;font-family:'Liberation Sans',sans-serif;left:-69.79999999999995px;width:2000px;text-align:center;transform:scale(1,1.04);transform-origin:50% 32.20px;">1.022 - 1.023</div>
<div style="position:absolute;top:755.50px;line-height:42px;font-size:32.3px;color:#000;white-space:nowrap;font-family:'Liberation Sans',sans-serif;left:-567px;width:2000px;text-align:right;transform:scale(1,1.04);transform-origin:100% 32.20px;">1</div>
<div style="position:absolute;left:603px;top:795px;width:835px;height:2px;background:rgba(0,0,0,.66);"></div>
<div style="position:absolute;top:795.50px;line-height:42px;font-size:32.3px;color:#000;white-space:nowrap;font-family:'Liberation Sans',sans-serif;left:85.6px;transform:scale(1,1.04);transform-origin:0 32.20px;">Salinität errechnet (in psu)</div>
<div style="position:absolute;left:603px;top:797px;width:227px;height:40px;background:#ff3333;"></div>
<div style="position:absolute;top:795.50px;line-height:42px;font-size:32.3px;color:#000;white-space:nowrap;font-family:'Liberation Sans',sans-serif;left:-283.79999999999995px;width:2000px;text-align:center;transform:scale(1,1.04);transform-origin:50% 32.20px;">36,7</div>
<div style="position:absolute;top:795.50px;line-height:42px;font-size:32.3px;color:#000;white-space:nowrap;font-family:'Liberation Sans',sans-serif;left:-69.79999999999995px;width:2000px;text-align:center;transform:scale(1,1.04);transform-origin:50% 32.20px;">34 - 35</div>
<div style="position:absolute;top:795.50px;line-height:42px;font-size:32.3px;color:#000;white-space:nowrap;font-family:'Liberation Sans',sans-serif;left:-567px;width:2000px;text-align:right;transform:scale(1,1.04);transform-origin:100% 32.20px;">1</div>
<div style="position:absolute;left:603px;top:835px;width:835px;height:2px;background:rgba(0,0,0,.66);"></div>
<div style="position:absolute;top:835.50px;line-height:42px;font-size:32.3px;color:#000;white-space:nowrap;font-family:'Liberation Sans',sans-serif;left:85.6px;transform:scale(1,1.04);transform-origin:0 32.20px;">pH</div>
<div style="position:absolute;left:603px;top:837px;width:227px;height:40px;background:#33cc66;"></div>
<div style="position:absolute;top:835.50px;line-height:42px;font-size:32.3px;color:#000;white-space:nowrap;font-family:'Liberation Sans',sans-serif;left:-283.79999999999995px;width:2000px;text-align:center;transform:scale(1,1.04);transform-origin:50% 32.20px;">7,9</div>
<div style="position:absolute;top:835.50px;line-height:42px;font-size:32.3px;color:#000;white-space:nowrap;font-family:'Liberation Sans',sans-serif;left:-69.79999999999995px;width:2000px;text-align:center;transform:scale(1,1.04);transform-origin:50% 32.20px;">7.9 – 8.3</div>
<div style="position:absolute;top:835.50px;line-height:42px;font-size:32.3px;color:#000;white-space:nowrap;font-family:'Liberation Sans',sans-serif;left:-567px;width:2000px;text-align:right;transform:scale(1,1.04);transform-origin:100% 32.20px;">2</div>
<div style="position:absolute;left:603px;top:875px;width:835px;height:2px;background:rgba(0,0,0,.66);"></div>
<div style="position:absolute;top:875.50px;line-height:42px;font-size:32.3px;color:#000;white-space:nowrap;font-family:'Liberation Sans',sans-serif;left:85.6px;transform:scale(1,1.04);transform-origin:0 32.20px;">Karbonathärte (in dKH)</div>
<div style="position:absolute;left:603px;top:877px;width:227px;height:40px;background:#33cc66;"></div>
<div style="position:absolute;top:875.50px;line-height:42px;font-size:32.3px;color:#000;white-space:nowrap;font-family:'Liberation Sans',sans-serif;left:-283.79999999999995px;width:2000px;text-align:center;transform:scale(1,1.04);transform-origin:50% 32.20px;">6,5</div>
<div style="position:absolute;top:875.50px;line-height:42px;font-size:32.3px;color:#000;white-space:nowrap;font-family:'Liberation Sans',sans-serif;left:-69.79999999999995px;width:2000px;text-align:center;transform:scale(1,1.04);transform-origin:50% 32.20px;">6.5 – 8.5</div>
<div style="position:absolute;top:875.50px;line-height:42px;font-size:32.3px;color:#000;white-space:nowrap;font-family:'Liberation Sans',sans-serif;left:-567px;width:2000px;text-align:right;transform:scale(1,1.04);transform-origin:100% 32.20px;">3</div>
<div style="position:absolute;left:603px;top:915px;width:835px;height:2px;background:rgba(0,0,0,.66);"></div>
<div style="position:absolute;top:915.50px;line-height:42px;font-size:32.3px;color:#000;white-space:nowrap;font-family:'Liberation Sans',sans-serif;left:85.6px;transform:scale(1,1.04);transform-origin:0 32.20px;">Säurebindungsvermögen pH 4,3 mmol/l</div>
<div style="position:absolute;left:603px;top:917px;width:227px;height:40px;background:#33cc66;"></div>
<div style="position:absolute;top:915.50px;line-height:42px;font-size:32.3px;color:#000;white-space:nowrap;font-family:'Liberation Sans',sans-serif;left:-283.79999999999995px;width:2000px;text-align:center;transform:scale(1,1.04);transform-origin:50% 32.20px;">2,32</div>
<div style="position:absolute;top:915.50px;line-height:42px;font-size:32.3px;color:#000;white-space:nowrap;font-family:'Liberation Sans',sans-serif;left:-69.79999999999995px;width:2000px;text-align:center;transform:scale(1,1.04);transform-origin:50% 32.20px;">2.32 – 3.03</div>
<div style="position:absolute;top:915.50px;line-height:42px;font-size:32.3px;color:#000;white-space:nowrap;font-family:'Liberation Sans',sans-serif;left:-567px;width:2000px;text-align:right;transform:scale(1,1.04);transform-origin:100% 32.20px;">3</div>
<div style="position:absolute;left:603px;top:955px;width:835px;height:2px;background:rgba(0,0,0,.66);"></div>
<div style="position:absolute;top:955.50px;line-height:42px;font-size:32.3px;color:#000;white-space:nowrap;font-family:'Liberation Sans',sans-serif;left:85.6px;transform:scale(1,1.04);transform-origin:0 32.20px;">Geruch</div>
<div style="position:absolute;top:955.50px;line-height:42px;font-size:32.3px;color:#000;white-space:nowrap;font-family:'Liberation Sans',sans-serif;left:-283.79999999999995px;width:2000px;text-align:center;transform:scale(1,1.04);transform-origin:50% 32.20px;">keiner</div>
<div style="position:absolute;top:955.50px;line-height:42px;font-size:32.3px;color:#000;white-space:nowrap;font-family:'Liberation Sans',sans-serif;left:-69.79999999999995px;width:2000px;text-align:center;transform:scale(1,1.04);transform-origin:50% 32.20px;">keiner</div>
<div style="position:absolute;top:955.50px;line-height:42px;font-size:32.3px;color:#000;white-space:nowrap;font-family:'Liberation Sans',sans-serif;left:-567px;width:2000px;text-align:right;transform:scale(1,1.04);transform-origin:100% 32.20px;">40</div>
<div style="position:absolute;left:603px;top:995px;width:835px;height:2px;background:rgba(0,0,0,.66);"></div>
<div style="position:absolute;top:995.50px;line-height:42px;font-size:32.3px;color:#000;white-space:nowrap;font-family:'Liberation Sans',sans-serif;left:85.6px;transform:scale(1,1.04);transform-origin:0 32.20px;">Wasserfärbung</div>
<div style="position:absolute;top:995.50px;line-height:42px;font-size:32.3px;color:#000;white-space:nowrap;font-family:'Liberation Sans',sans-serif;left:-283.79999999999995px;width:2000px;text-align:center;transform:scale(1,1.04);transform-origin:50% 32.20px;">farblos</div>
<div style="position:absolute;top:995.50px;line-height:42px;font-size:32.3px;color:#000;white-space:nowrap;font-family:'Liberation Sans',sans-serif;left:-69.79999999999995px;width:2000px;text-align:center;transform:scale(1,1.04);transform-origin:50% 32.20px;">farblos</div>
<div style="position:absolute;top:995.50px;line-height:42px;font-size:32.3px;color:#000;white-space:nowrap;font-family:'Liberation Sans',sans-serif;left:-567px;width:2000px;text-align:right;transform:scale(1,1.04);transform-origin:100% 32.20px;">41</div>
<div style="position:absolute;left:603px;top:1035px;width:835px;height:2px;background:rgba(0,0,0,.66);"></div>
<div style="position:absolute;left:603px;top:1199px;width:835px;height:54px;background:#00b7ff;"></div>
<div style="position:absolute;left:603px;top:1199px;width:835px;height:2px;background:rgba(0,0,0,.8);"></div>
<div style="position:absolute;left:603px;top:1199px;width:1px;height:54px;background:#000;"></div>
<div style="position:absolute;left:603px;top:1251px;width:835px;height:2px;background:rgba(0,0,0,.74);"></div>
<div style="position:absolute;top:1210.55px;line-height:35px;font-size:26.67px;color:#fff;white-space:nowrap;font-family:'Liberation Sans',sans-serif;font-weight:bold;left:-284px;width:2000px;text-align:center;transform:scale(1,1.03);transform-origin:50% 26.75px;">gemessen</div>
<div style="position:absolute;top:1210.55px;line-height:35px;font-size:26.67px;color:#fff;white-space:nowrap;font-family:'Liberation Sans',sans-serif;font-weight:bold;left:-70px;width:2000px;text-align:center;transform:scale(1,1.03);transform-origin:50% 26.75px;">Sollwert</div>
<div style="position:absolute;top:1210.55px;line-height:35px;font-size:26.67px;color:#fff;white-space:nowrap;font-family:'Liberation Sans',sans-serif;font-weight:bold;left:-731.5px;width:2000px;text-align:right;transform:scale(1,1.03);transform-origin:100% 26.75px;">Abweichung</div>
<div style="position:absolute;top:1210.55px;line-height:35px;font-size:26.67px;color:#fff;white-space:nowrap;font-family:'Liberation Sans',sans-serif;font-weight:bold;left:-567px;width:2000px;text-align:right;transform:scale(1,1.03);transform-origin:100% 26.75px;">Kommentar</div>
<div style="position:absolute;top:1251.50px;line-height:42px;font-size:32.3px;color:#000;white-space:nowrap;font-family:'Liberation Sans',sans-serif;left:85.6px;transform:scale(1,1.04);transform-origin:0 32.20px;">Magnesium</div>
<div style="position:absolute;top:1251.50px;line-height:42px;font-size:32.3px;color:#000;white-space:nowrap;font-family:'Liberation Sans',sans-serif;left:529.6px;transform:scale(1,1.04);transform-origin:0 32.20px;">Mg</div>
<div style="position:absolute;left:603px;top:1253px;width:227px;height:40px;background:#33cc66;"></div>
<div style="position:absolute;top:1251.50px;line-height:42px;font-size:32.3px;color:#000;white-space:nowrap;font-family:'Liberation Sans',sans-serif;left:-283.79999999999995px;width:2000px;text-align:center;transform:scale(1,1.04);transform-origin:50% 32.20px;">1392,00</div>
<div style="position:absolute;top:1251.50px;line-height:42px;font-size:32.3px;color:#000;white-space:nowrap;font-family:'Liberation Sans',sans-serif;left:-69.79999999999995px;width:2000px;text-align:center;transform:scale(1,1.04);transform-origin:50% 32.20px;">1200 - 1450</div>
<div style="position:absolute;top:1251.50px;line-height:42px;font-size:32.3px;color:#000;white-space:nowrap;font-family:'Liberation Sans',sans-serif;left:-567px;width:2000px;text-align:right;transform:scale(1,1.04);transform-origin:100% 32.20px;">6</div>
<div style="position:absolute;left:603px;top:1291px;width:835px;height:2px;background:rgba(0,0,0,.66);"></div>
<div style="position:absolute;top:1291.50px;line-height:42px;font-size:32.3px;color:#000;white-space:nowrap;font-family:'Liberation Sans',sans-serif;left:85.6px;transform:scale(1,1.04);transform-origin:0 32.20px;">Calcium</div>
<div style="position:absolute;top:1291.50px;line-height:42px;font-size:32.3px;color:#000;white-space:nowrap;font-family:'Liberation Sans',sans-serif;left:529.6px;transform:scale(1,1.04);transform-origin:0 32.20px;">Ca</div>
<div style="position:absolute;left:603px;top:1293px;width:227px;height:40px;background:#33cc66;"></div>
<div style="position:absolute;top:1291.50px;line-height:42px;font-size:32.3px;color:#000;white-space:nowrap;font-family:'Liberation Sans',sans-serif;left:-283.79999999999995px;width:2000px;text-align:center;transform:scale(1,1.04);transform-origin:50% 32.20px;">405,00</div>
<div style="position:absolute;top:1291.50px;line-height:42px;font-size:32.3px;color:#000;white-space:nowrap;font-family:'Liberation Sans',sans-serif;left:-69.79999999999995px;width:2000px;text-align:center;transform:scale(1,1.04);transform-origin:50% 32.20px;">400 - 440</div>
<div style="position:absolute;top:1291.50px;line-height:42px;font-size:32.3px;color:#000;white-space:nowrap;font-family:'Liberation Sans',sans-serif;left:-567px;width:2000px;text-align:right;transform:scale(1,1.04);transform-origin:100% 32.20px;">7</div>
<div style="position:absolute;left:603px;top:1331px;width:835px;height:2px;background:rgba(0,0,0,.66);"></div>
<div style="position:absolute;top:1331.50px;line-height:42px;font-size:32.3px;color:#000;white-space:nowrap;font-family:'Liberation Sans',sans-serif;left:85.6px;transform:scale(1,1.04);transform-origin:0 32.20px;">Kalium</div>
<div style="position:absolute;top:1331.50px;line-height:42px;font-size:32.3px;color:#000;white-space:nowrap;font-family:'Liberation Sans',sans-serif;left:529.6px;transform:scale(1,1.04);transform-origin:0 32.20px;">K</div>
<div style="position:absolute;left:603px;top:1333px;width:227px;height:40px;background:#33cc66;"></div>
<div style="position:absolute;top:1331.50px;line-height:42px;font-size:32.3px;color:#000;white-space:nowrap;font-family:'Liberation Sans',sans-serif;left:-283.79999999999995px;width:2000px;text-align:center;transform:scale(1,1.04);transform-origin:50% 32.20px;">360,00</div>
<div style="position:absolute;top:1331.50px;line-height:42px;font-size:32.3px;color:#000;white-space:nowrap;font-family:'Liberation Sans',sans-serif;left:-69.79999999999995px;width:2000px;text-align:center;transform:scale(1,1.04);transform-origin:50% 32.20px;">380 - 420</div>
<div style="position:absolute;top:1331.50px;line-height:42px;font-size:32.3px;color:#000;white-space:nowrap;font-family:'Liberation Sans',sans-serif;left:-567px;width:2000px;text-align:right;transform:scale(1,1.04);transform-origin:100% 32.20px;">8</div>
<div style="position:absolute;left:603px;top:1371px;width:835px;height:2px;background:rgba(0,0,0,.66);"></div>
<div style="position:absolute;top:1371.50px;line-height:42px;font-size:32.3px;color:#000;white-space:nowrap;font-family:'Liberation Sans',sans-serif;left:85.6px;transform:scale(1,1.04);transform-origin:0 32.20px;">Strontium</div>
<div style="position:absolute;top:1371.50px;line-height:42px;font-size:32.3px;color:#000;white-space:nowrap;font-family:'Liberation Sans',sans-serif;left:529.6px;transform:scale(1,1.04);transform-origin:0 32.20px;">Sr</div>
<div style="position:absolute;left:603px;top:1373px;width:227px;height:40px;background:#33cc66;"></div>
<div style="position:absolute;top:1371.50px;line-height:42px;font-size:32.3px;color:#000;white-space:nowrap;font-family:'Liberation Sans',sans-serif;left:-283.79999999999995px;width:2000px;text-align:center;transform:scale(1,1.04);transform-origin:50% 32.20px;">7,15</div>
<div style="position:absolute;top:1371.50px;line-height:42px;font-size:32.3px;color:#000;white-space:nowrap;font-family:'Liberation Sans',sans-serif;left:-69.79999999999995px;width:2000px;text-align:center;transform:scale(1,1.04);transform-origin:50% 32.20px;">6.0 - 9.0</div>
<div style="position:absolute;top:1371.50px;line-height:42px;font-size:32.3px;color:#000;white-space:nowrap;font-family:'Liberation Sans',sans-serif;left:-567px;width:2000px;text-align:right;transform:scale(1,1.04);transform-origin:100% 32.20px;">9</div>
<div style="position:absolute;left:603px;top:1411px;width:835px;height:2px;background:rgba(0,0,0,.66);"></div>
<div style="position:absolute;top:1411.50px;line-height:42px;font-size:32.3px;color:#000;white-space:nowrap;font-family:'Liberation Sans',sans-serif;left:85.6px;transform:scale(1,1.04);transform-origin:0 32.20px;">Bor</div>
<div style="position:absolute;top:1411.50px;line-height:42px;font-size:32.3px;color:#000;white-space:nowrap;font-family:'Liberation Sans',sans-serif;left:529.6px;transform:scale(1,1.04);transform-origin:0 32.20px;">B</div>
<div style="position:absolute;left:603px;top:1413px;width:227px;height:40px;background:#eb613d;"></div>
<div style="position:absolute;top:1411.50px;line-height:42px;font-size:32.3px;color:#000;white-space:nowrap;font-family:'Liberation Sans',sans-serif;left:-283.79999999999995px;width:2000px;text-align:center;transform:scale(1,1.04);transform-origin:50% 32.20px;">0,603</div>
<div style="position:absolute;top:1411.50px;line-height:42px;font-size:32.3px;color:#000;white-space:nowrap;font-family:'Liberation Sans',sans-serif;left:-69.79999999999995px;width:2000px;text-align:center;transform:scale(1,1.04);transform-origin:50% 32.20px;">4.0 - 5.0</div>
<div style="position:absolute;top:1411.50px;line-height:42px;font-size:32.3px;color:#000;white-space:nowrap;font-family:'Liberation Sans',sans-serif;left:1035.6px;transform:scale(1,1.04);transform-origin:0 32.20px;">Dosieren</div>
<div style="position:absolute;top:1411.50px;line-height:42px;font-size:32.3px;color:#000;white-space:nowrap;font-family:'Liberation Sans',sans-serif;left:-567px;width:2000px;text-align:right;transform:scale(1,1.04);transform-origin:100% 32.20px;">19</div>
<div style="position:absolute;left:603px;top:1451px;width:835px;height:2px;background:rgba(0,0,0,.66);"></div>
<div style="position:absolute;top:1451.50px;line-height:42px;font-size:32.3px;color:#000;white-space:nowrap;font-family:'Liberation Sans',sans-serif;left:85.6px;transform:scale(1,1.04);transform-origin:0 32.20px;">Iod</div>
<div style="position:absolute;top:1451.50px;line-height:42px;font-size:32.3px;color:#000;white-space:nowrap;font-family:'Liberation Sans',sans-serif;left:529.6px;transform:scale(1,1.04);transform-origin:0 32.20px;">I</div>
<div style="position:absolute;left:603px;top:1453px;width:227px;height:40px;background:#33cc66;"></div>
<div style="position:absolute;top:1451.50px;line-height:42px;font-size:32.3px;color:#000;white-space:nowrap;font-family:'Liberation Sans',sans-serif;left:-283.79999999999995px;width:2000px;text-align:center;transform:scale(1,1.04);transform-origin:50% 32.20px;">0,05</div>
<div style="position:absolute;top:1451.50px;line-height:42px;font-size:32.3px;color:#000;white-space:nowrap;font-family:'Liberation Sans',sans-serif;left:-69.79999999999995px;width:2000px;text-align:center;transform:scale(1,1.04);transform-origin:50% 32.20px;">0.06 - 0.08</div>
<div style="position:absolute;top:1451.50px;line-height:42px;font-size:32.3px;color:#000;white-space:nowrap;font-family:'Liberation Sans',sans-serif;left:-567px;width:2000px;text-align:right;transform:scale(1,1.04);transform-origin:100% 32.20px;">12</div>
<div style="position:absolute;left:603px;top:1491px;width:835px;height:2px;background:rgba(0,0,0,.66);"></div>
<div style="position:absolute;left:0px;top:1527px;width:2560px;height:73px;background:#f2f2f2;"></div>
<div style="position:absolute;left:0px;top:1526px;width:82px;height:2px;background:#e2e2e2;"></div>
<div style="position:absolute;left:92px;top:1527px;width:300px;height:73px;background:#ffffff;"></div>
<div style="position:absolute;left:90px;top:1528px;width:2px;height:72px;background:#e0e0e0;"></div>
<div style="position:absolute;left:392px;top:1528px;width:2px;height:72px;background:#e0e0e0;"></div>
<div style="position:absolute;left:32px;top:1560px;width:25px;height:5.5px;background:#b2b2b2;"></div>
<div style="position:absolute;left:41.8px;top:1550px;width:5.5px;height:25px;background:#b2b2b2;"></div>
<div style="position:absolute;top:1546.15px;line-height:38px;font-size:29px;color:#6e6e6e;white-space:nowrap;font-family:'Liberation Sans',sans-serif;left:-758.2px;width:2000px;text-align:center;">Economy Test</div>
<div style="position:absolute;left:2368.5px;top:1540px;width:179.5px;height:48px;background:#fff;border:2px solid #cccccc;border-radius:4px;"></div>
<div style="position:absolute;top:1546.69px;line-height:36px;font-size:28px;color:#555;white-space:nowrap;font-family:'Liberation Sans',sans-serif;left:2380px;transform:scaleX(.845);transform-origin:left;-webkit-text-stroke:0.5px #fff;">SUMME</div>
<div style="position:absolute;top:1543.54px;line-height:41px;font-size:31.6px;color:#4a4a4a;white-space:nowrap;font-family:'Liberation Sans',sans-serif;font-weight:bold;left:1527.3000000000002px;width:2000px;text-align:center;transform:scaleX(.95);">0</div>
</div></body></html>
